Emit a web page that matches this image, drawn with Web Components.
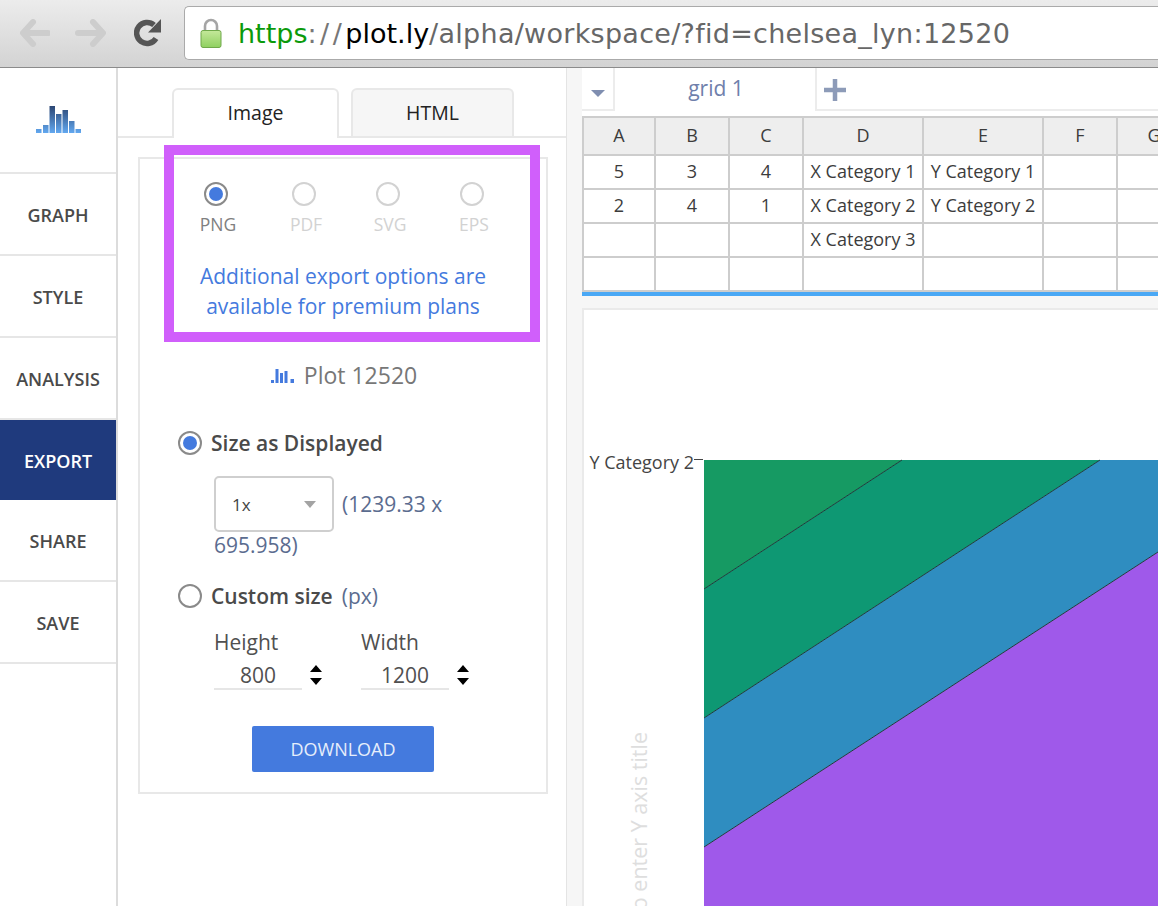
<!DOCTYPE html>
<html>
<head>
<meta charset="utf-8">
<title>Export</title>
<style>
  html, body { margin: 0; height: 906px; overflow: hidden; background: #fff; }
  body { font-family: "Open Sans", "Liberation Sans", sans-serif; color: #444; }
  .main { display: flex; height: 838px; }
</style>
</head>
<body>
<browser-bar></browser-bar>
<div class="main">
  <side-nav>
    <nav-item>GRAPH</nav-item>
    <nav-item>STYLE</nav-item>
    <nav-item>ANALYSIS</nav-item>
    <nav-item active>EXPORT</nav-item>
    <nav-item>SHARE</nav-item>
    <nav-item>SAVE</nav-item>
  </side-nav>
  <export-panel></export-panel>
  <work-area></work-area>
</div>

<script>
class BrowserBar extends HTMLElement {
  connectedCallback() {
    this.attachShadow({ mode: "open" });
    this.shadowRoot.innerHTML = `
      <style>
        :host {
          display: flex;
          align-items: center;
          box-sizing: border-box;
          height: 68px;
          padding: 0 0 1px 20px;
          background: linear-gradient(#ececec, #d3d3d3);
          border-bottom: 1px solid #8b8b8b;
        }
        svg { display: block; flex: none; }
        .back { margin-right: 25px; }
        .reload { margin: 0 23px 0 28px; }
        .address {
          flex: 1;
          display: flex;
          align-items: center;
          box-sizing: border-box;
          height: 54px;
          margin-bottom: 1px;
          padding-left: 15px;
          background: #fff;
          border: 1px solid #aaa;
          border-right: none;
          border-radius: 5px 0 0 5px;
        }
        .url {
          margin: 2px 0 0 16px;
          font-family: "DejaVu Sans", sans-serif;
          font-size: 27px;
          color: #676767;
          white-space: nowrap;
        }
        .secure { color: #0b9a0b; }
        .slashes { letter-spacing: 3.5px; color: #777; }
        .host { color: #000; }
        .path { letter-spacing: 0.28px; }
      </style>
      <svg class="back" width="30" height="28" viewBox="0 0 30 28">
        <path d="M13 3 3 14l10 11M4 14h24" fill="none" stroke="#cdcdcd" stroke-width="6" stroke-linecap="round" stroke-linejoin="round"/>
      </svg>
      <svg width="31" height="28" viewBox="0 0 31 28">
        <path d="M18 3l10 11-10 11M27 14H3" fill="none" stroke="#cdcdcd" stroke-width="6" stroke-linecap="round" stroke-linejoin="round"/>
      </svg>
      <svg class="reload" width="27" height="28" viewBox="0 0 27 28">
        <path d="M22 19.500A10.500 10.500 0 1 1 20 6" fill="none" stroke="#555" stroke-width="5.500"/>
        <path d="M27 0v13.500H14z" fill="#555"/>
      </svg>
      <div class="address">
        <svg width="22" height="30" viewBox="0 0 22 30">
          <defs>
            <linearGradient id="lockBody" x1="0" y1="0" x2="0" y2="1">
              <stop offset="0" stop-color="#c4e89a"/>
              <stop offset="1" stop-color="#8fd060"/>
            </linearGradient>
          </defs>
          <path d="M5 13V8a6 6 0 0 1 12 0v5" fill="none" stroke="#a5a5a5" stroke-width="2.600"/>
          <rect x="1" y="12.500" width="20" height="17" rx="2" fill="url(#lockBody)" stroke="#6fa84a"/>
        </svg>
        <div class="url"><span class="secure">https</span><span class="slashes">://</span><span class="host">plot.ly</span><span class="path">/alpha/workspace/?fid=chelsea_lyn:12520</span></div>
      </div>
    `;
  }
}

class SideNav extends HTMLElement {
  connectedCallback() {
    this.attachShadow({ mode: "open" });
    this.shadowRoot.innerHTML = `
      <style>
        :host {
          display: block;
          flex: none;
          width: 116px;
          border-right: 2px solid #dcdcdc;
          background: #fff;
        }
        .logo {
          display: flex;
          align-items: center;
          justify-content: center;
          box-sizing: border-box;
          height: 106px;
          padding-bottom: 3px;
          border-bottom: 2px solid #e6e6e6;
        }
      </style>
      <div class="logo">
        <svg width="46" height="30" viewBox="0 0 46 30">
          <defs>
            <linearGradient id="bars" gradientUnits="userSpaceOnUse" x1="0" y1="2" x2="0" y2="29">
              <stop offset="0" stop-color="#2c4673"/>
              <stop offset="1" stop-color="#62a8f0"/>
            </linearGradient>
          </defs>
          <g fill="url(#bars)">
            <rect x="1" y="25" width="5.500" height="4"/>
            <rect x="8" y="21" width="5.500" height="8"/>
            <rect x="14.500" y="2" width="5.500" height="27"/>
            <rect x="21" y="10" width="5.500" height="19"/>
            <rect x="27.500" y="6" width="5.500" height="23"/>
            <rect x="34" y="17" width="5.500" height="12"/>
            <rect x="40.500" y="25" width="5.500" height="4"/>
          </g>
        </svg>
      </div>
      <slot></slot>
    `;
  }
}

class NavItem extends HTMLElement {
  connectedCallback() {
    this.attachShadow({ mode: "open" });
    this.shadowRoot.innerHTML = `
      <style>
        :host {
          display: flex;
          align-items: center;
          justify-content: center;
          box-sizing: border-box;
          height: 82px;
          padding-top: 2px;
          border-bottom: 2px solid #e6e6e6;
          font-size: 18px;
          font-weight: 600;
          color: #4a4a4a;
        }
        :host([active]) {
          height: 80px;
          background: #1f3a7d;
          border-bottom: none;
          color: #fff;
        }
      </style>
      <slot></slot>
    `;
  }
}

class RadioMark extends HTMLElement {
  connectedCallback() {
    this.attachShadow({ mode: "open" });
    this.shadowRoot.innerHTML = `
      <style>
        :host {
          display: block;
          flex: none;
          box-sizing: border-box;
          width: 24px;
          height: 24px;
          padding: 3px;
          border: 2px solid #8a8a8a;
          border-radius: 50%;
          background: #fff;
        }
        :host([disabled]) { border-color: #d2d2d2; }
        .dot { width: 100%; height: 100%; border-radius: 50%; }
        :host([checked]) .dot { background: #447ade; }
      </style>
      <div class="dot"></div>
    `;
  }
}

class FormatOption extends HTMLElement {
  connectedCallback() {
    this.attachShadow({ mode: "open" });
    const checked = this.hasAttribute("checked");
    this.shadowRoot.innerHTML = `
      <style>
        :host {
          display: flex;
          flex-direction: column;
          width: ${checked ? 88 : 84}px;
          font-size: 17.500px;
          line-height: 22px;
          color: ${checked ? "#808080" : "#d2d2d2"};
        }
        radio-mark { margin-left: 20px; }
        .label {
          display: flex;
          justify-content: center;
          width: 28px;
          margin: 7px 0 0 20px;
          white-space: nowrap;
        }
      </style>
      <radio-mark ${checked ? "checked" : "disabled"}></radio-mark>
      <div class="label"><slot></slot></div>
    `;
  }
}

class NumberField extends HTMLElement {
  connectedCallback() {
    this.attachShadow({ mode: "open" });
    this.shadowRoot.innerHTML = `
      <style>
        :host { display: block; width: 147px; color: #505050; }
        .label { font-size: 21px; line-height: 26px; }
        .row { display: flex; align-items: center; margin-top: 8px; }
        .value {
          box-sizing: border-box;
          width: 88px;
          height: 27px;
          border-bottom: 2px solid #e6e6e6;
          text-align: center;
          font-size: 21px;
          line-height: 24px;
        }
        svg { display: block; margin: -3px 0 0 7px; }
      </style>
      <div class="label">${this.getAttribute("label")}</div>
      <div class="row">
        <div class="value">${this.getAttribute("value")}</div>
        <svg width="14" height="20" viewBox="0 0 14 20">
          <path d="M7 0l6 7H1zM7 20l-6-7h12z" fill="#000"/>
        </svg>
      </div>
    `;
  }
}

class ExportPanel extends HTMLElement {
  connectedCallback() {
    this.attachShadow({ mode: "open" });
    this.shadowRoot.innerHTML = `
      <style>
        :host {
          display: block;
          position: relative;
          flex: none;
          width: 449px;
          height: 100%;
          padding-top: 20px;
          box-sizing: border-box;
          background: #fff;
          border-right: 1px solid #e4e4e4;
        }
        .tabs {
          display: flex;
          gap: 12px;
          box-sizing: border-box;
          height: 50px;
          padding-left: 54px;
          border-bottom: 2px solid #e8e8e8;
        }
        .tab {
          box-sizing: border-box;
          height: 50px;
          border: 2px solid #e8e8e8;
          border-bottom: none;
          border-radius: 6px 6px 0 0;
          text-align: center;
          font-size: 19.500px;
          line-height: 46px;
          font-weight: 500;
          color: #222;
        }
        .tab.on { width: 167px; background: #fff; }
        .tab.off { width: 163px; height: 48px; background: #f6f6f6; }
        .box {
          box-sizing: border-box;
          width: 410px;
          height: 637px;
          margin: 19px 0 0 20px;
          padding: 23px 0 0 38px;
          border: 2px solid #e8e8e8;
        }
        .formats { display: flex; margin-left: 6px; }
        .upsell {
          width: 340px;
          margin: 26px 0 0 -5px;
          text-align: center;
          font-size: 21px;
          line-height: 30px;
          color: #447ade;
        }
        .plot-name {
          display: flex;
          align-items: center;
          justify-content: center;
          gap: 10px;
          width: 340px;
          margin: 39px 0 0 -8px;
          padding-left: 4px;
          font-size: 23px;
          line-height: 30px;
          color: #777;
        }
        .option {
          display: flex;
          align-items: center;
          gap: 9px;
          font-size: 21px;
          line-height: 28px;
          font-weight: 600;
          color: #4a4a4a;
        }
        .choice1 { margin-top: 39px; }
        .hint { font-weight: 400; color: #5b6c8f; }
        .scale {
          margin: 19px 0 0 36px;
          font-size: 21px;
          line-height: 27px;
          color: #5b6c8f;
        }
        .scale-row { display: flex; align-items: center; gap: 8px; }
        .select {
          display: flex;
          align-items: center;
          justify-content: space-between;
          box-sizing: border-box;
          width: 120px;
          height: 56px;
          padding: 0 16px;
          border: 2px solid #cfcfcf;
          border-radius: 5px;
          font-size: 17px;
          color: #444;
        }
        .caret {
          width: 0;
          height: 0;
          border: 6px solid transparent;
          border-top: 7px solid #a3a3a3;
          border-bottom: none;
        }
        .choice2 { margin-top: 23px; }
        .fields { display: flex; margin: 19px 0 0 36px; }
        .download {
          width: 182px;
          height: 46px;
          margin: 36px 0 0 74px;
          background: #447ade;
          border-radius: 2px;
          text-align: center;
          font-size: 18px;
          line-height: 47px;
          color: #e6eefb;
        }
        .highlight {
          position: absolute;
          left: 46px;
          top: 77px;
          box-sizing: border-box;
          width: 376px;
          height: 197px;
          border: 10px solid #d05ffb;
          pointer-events: none;
        }
      </style>
      <div class="tabs">
        <div class="tab on">Image</div>
        <div class="tab off">HTML</div>
      </div>
      <div class="box">
        <div class="formats">
          <format-option checked>PNG</format-option>
          <format-option>PDF</format-option>
          <format-option>SVG</format-option>
          <format-option>EPS</format-option>
        </div>
        <div class="upsell">Additional export options are<br>available for premium plans</div>
        <div class="plot-name">
          <svg width="23" height="15" viewBox="0 0 23 15" fill="#447ade">
            <rect x="0" y="12" width="3" height="3"/>
            <rect x="4.500" y="1" width="3" height="14"/>
            <rect x="9" y="5" width="3" height="10"/>
            <rect x="13.500" y="3" width="3" height="12"/>
            <rect x="19.500" y="11" width="3.500" height="4"/>
          </svg>
          <span>Plot 12520</span>
        </div>
        <div class="option choice1"><radio-mark checked></radio-mark><span>Size as Displayed</span></div>
        <div class="scale">
          <div class="scale-row">
            <div class="select"><span>1x</span><span class="caret"></span></div>
            <span>(1239.33 x</span>
          </div>
          <div>695.958)</div>
        </div>
        <div class="option choice2"><radio-mark></radio-mark><span>Custom size</span><span class="hint">(px)</span></div>
        <div class="fields">
          <number-field label="Height" value="800"></number-field>
          <number-field label="Width" value="1200"></number-field>
        </div>
        <div class="download">DOWNLOAD</div>
      </div>
      <div class="highlight"></div>
    `;
  }
}

class GridSheet extends HTMLElement {
  connectedCallback() {
    this.attachShadow({ mode: "open" });
    const rows = [
      ["5", "3", "4", "X Category 1", "Y Category 1"],
      ["2", "4", "1", "X Category 2", "Y Category 2"],
      ["", "", "", "X Category 3", ""],
      ["", "", "", "", ""],
    ];
    const head = ["A", "B", "C", "D", "E", "F", "G"]
      .map((name) => `<div class="cell head">${name}</div>`)
      .join("");
    const body = rows
      .map((row) =>
        [0, 1, 2, 3, 4, 5, 6]
          .map((i) => `<div class="cell">${row[i] || ""}</div>`)
          .join("")
      )
      .join("");
    this.shadowRoot.innerHTML = `
      <style>
        :host {
          display: block;
          overflow: hidden;
          height: 176px;
          border-bottom: 4px solid #4aa8f5;
          background: #fff;
        }
        .grid {
          display: grid;
          grid-template-columns: 72px 74px 74px 120px 120px 74px 74px;
          grid-template-rows: 38px 34px 34px 34px 34px;
          width: 610px;
          border-top: 2px solid #cdcdcd;
          border-left: 2px solid #cdcdcd;
          box-sizing: border-box;
        }
        .cell {
          display: flex;
          align-items: center;
          justify-content: center;
          box-sizing: border-box;
          padding-bottom: 2px;
          border-right: 2px solid #cdcdcd;
          border-bottom: 2px solid #cdcdcd;
          font-size: 18px;
          color: #3c3c3c;
          white-space: nowrap;
        }
        .head { background: #eeeeee; }
      </style>
      <div class="grid">${head}${body}</div>
    `;
  }
}

class PlotView extends HTMLElement {
  connectedCallback() {
    this.attachShadow({ mode: "open" });
    this.shadowRoot.innerHTML = `
      <style>
        :host {
          display: block;
          flex: 1;
          overflow: hidden;
          background: #fff;
          border-left: 2px solid #eaeaea;
          border-top: 2px solid #eaeaea;
        }
        svg { display: block; }
        text { font-family: "Open Sans", sans-serif; }
      </style>
      <svg width="574" height="596" viewBox="584 310 574 596">
        <polygon points="704,460 902,460 704,589" fill="#169a63"/>
        <polygon points="902,460 1100,460 704,718 704,589" fill="#0e9873"/>
        <polygon points="1100,460 1158,460 1158,552 704,847 704,718" fill="#2f8dc0"/>
        <polygon points="1158,552 1158,906 704,906 704,847" fill="#9f59ea"/>
        <path d="M704 589 902 460M704 718 1100 460M704 847 1158 552" fill="none" stroke="#1f3a3a" stroke-width="1"/>
        <path d="M694 459.500h9" stroke="#444" stroke-width="1"/>
        <text x="694" y="469" text-anchor="end" font-size="18" fill="#444">Y Category 2</text>
        <text transform="translate(647 732) rotate(-90)" font-size="21.500" fill="#dedede" text-anchor="end">Click to enter Y axis title</text>
      </svg>
    `;
  }
}

class WorkArea extends HTMLElement {
  connectedCallback() {
    this.attachShadow({ mode: "open" });
    this.shadowRoot.innerHTML = `
      <style>
        :host {
          display: flex;
          flex-direction: column;
          flex: 1;
          min-width: 0;
          box-sizing: border-box;
          padding-left: 15px;
          background: #f6f6f6;
        }
        .strip {
          display: flex;
          box-sizing: border-box;
          height: 43px;
          background: #fff;
          border-bottom: 2px solid #ececec;
        }
        .menu {
          display: flex;
          align-items: center;
          justify-content: center;
          width: 33px;
          padding-top: 10px;
          box-sizing: border-box;
          border-right: 2px solid #ececec;
        }
        .menu i {
          width: 0;
          height: 0;
          border: 7px solid transparent;
          border-top: 7px solid #7f8eb0;
          border-bottom: none;
        }
        .sheet {
          width: 202px;
          box-sizing: border-box;
          height: 43px;
          margin-bottom: -2px;
          padding-left: 2px;
          background: #fff;
          border-right: 2px solid #ececec;
          text-align: center;
          font-size: 21px;
          line-height: 41px;
          color: #6f80ab;
        }
        .add { margin: 10px 0 0 6px; display: block; }
        .gap { height: 5px; background: #fff; }
        .gutter { height: 12px; }
      </style>
      <div class="strip">
        <div class="menu"><i></i></div>
        <div class="sheet">grid 1</div>
        <svg class="add" width="24" height="24" viewBox="0 0 24 24"><path d="M12 1v22M1 12h22" stroke="#8d9bb8" stroke-width="4.500"/></svg>
      </div>
      <div class="gap"></div>
      <grid-sheet></grid-sheet>
      <div class="gutter"></div>
      <plot-view></plot-view>
    `;
  }
}

customElements.define("browser-bar", BrowserBar);
customElements.define("side-nav", SideNav);
customElements.define("nav-item", NavItem);
customElements.define("radio-mark", RadioMark);
customElements.define("format-option", FormatOption);
customElements.define("number-field", NumberField);
customElements.define("export-panel", ExportPanel);
customElements.define("grid-sheet", GridSheet);
customElements.define("plot-view", PlotView);
customElements.define("work-area", WorkArea);
</script>
</body>
</html>
